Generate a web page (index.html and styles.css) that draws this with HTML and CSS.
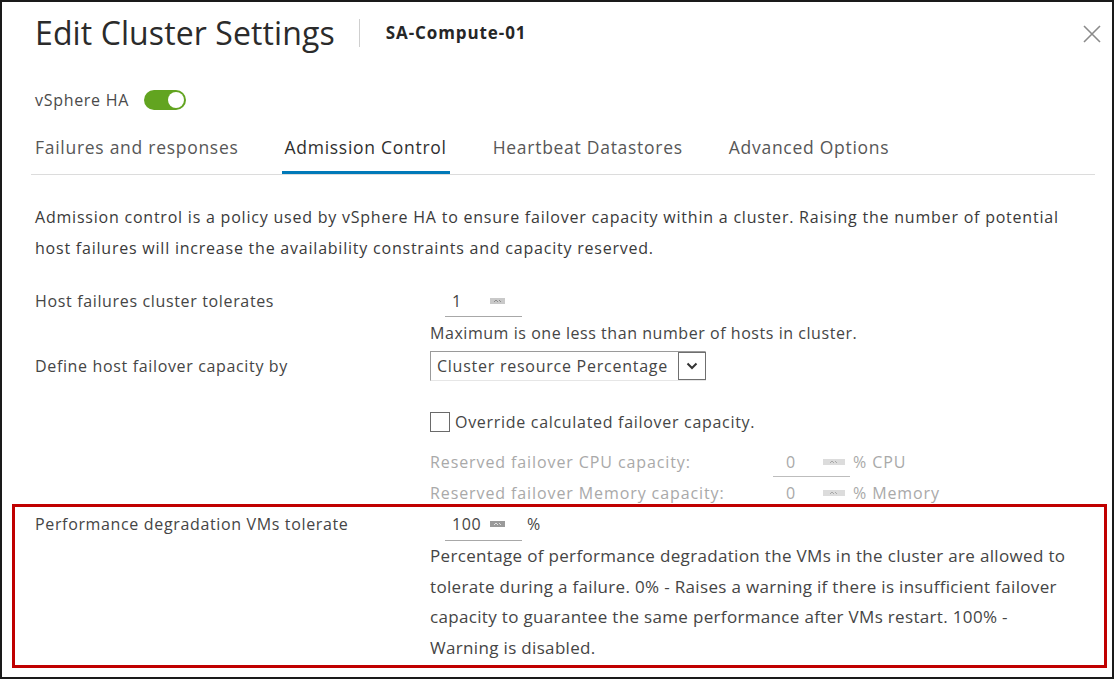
FILE: index.html
```html
<!DOCTYPE html>
<html lang="en">
<head>
  <meta charset="UTF-8" />
  <title>Edit Cluster Settings</title>
  <link rel="stylesheet" href="styles.css">
</head>
<body>
  <div class="dialog">
    <!-- Header -->
    <header class="dialog-header">
      <h1 class="title">Edit Cluster Settings</h1>
      <span class="divider"></span>
      <span class="subtitle">SA-Compute-01</span>
      <button type="button" class="close" aria-label="Close">
        <svg width="20" height="20" viewBox="0 0 20 20">
          <path d="M2 2 L18 18 M18 2 L2 18" stroke="#8a8a8a" stroke-width="1.6" fill="none"/>
        </svg>
      </button>
    </header>

    <div class="ha-row">
      <span>vSphere HA</span>
      <span class="toggle"><span class="knob"></span></span>
    </div>

    <nav class="tabs">
      <span class="tab">Failures and responses</span>
      <span class="tab active">Admission Control</span>
      <span class="tab">Heartbeat Datastores</span>
      <span class="tab">Advanced Options</span>
    </nav>

    <p class="intro">Admission control is a policy used by vSphere HA to ensure failover capacity within a cluster. Raising the number of potential host failures will increase the availability constraints and capacity reserved.</p>

    <div class="row first">
      <div class="label">Host failures cluster tolerates</div>
      <div class="control">
        <div class="spin">
          <span class="val">1</span>
          <svg class="arrows" width="15" height="6" viewBox="0 0 15 6"><rect width="15" height="6" fill="#c9c9c9"/><path d="M4 4 L6 2 L8 4 M9 2 L11 4" stroke="#8c8c8c" stroke-width="1" fill="none"/></svg>
        </div>
        <div class="help">Maximum is one less than number of hosts in cluster.</div>
      </div>
    </div>

    <div class="row select-row">
      <div class="label">Define host failover capacity by</div>
      <div class="control">
        <div class="select">
          <span class="select-text">Cluster resource Percentage</span>
          <span class="caret">
            <svg width="12" height="8" viewBox="0 0 12 8"><path d="M1.5 1.5 L6 6 L10.5 1.5" stroke="#333" stroke-width="2" fill="none"/></svg>
          </span>
        </div>
      </div>
    </div>

    <div class="row check-row">
      <div class="label"></div>
      <div class="control check">
        <span class="box"></span>
        <span>Override calculated failover capacity.</span>
      </div>
    </div>

    <div class="row reserved">
      <div class="label"></div>
      <div class="control disabled">
        <span class="res-label">Reserved failover CPU capacity:</span>
        <div class="spin small">
          <span class="val">0</span>
          <svg class="arrows" width="22" height="6" viewBox="0 0 22 6"><rect width="22" height="6" fill="#dcdcdc"/><path d="M7 4 L9 2 L11 4 M12 2 L14 4" stroke="#a8a8a8" stroke-width="1" fill="none"/></svg>
        </div>
        <span class="unit">% CPU</span>
      </div>
    </div>

    <div class="row reserved last">
      <div class="label"></div>
      <div class="control disabled">
        <span class="res-label">Reserved failover Memory capacity:</span>
        <div class="spin small plain">
          <span class="val">0</span>
          <svg class="arrows" width="22" height="6" viewBox="0 0 22 6"><rect width="22" height="6" fill="#dcdcdc"/><path d="M7 4 L9 2 L11 4 M12 2 L14 4" stroke="#a8a8a8" stroke-width="1" fill="none"/></svg>
        </div>
        <span class="unit">% Memory</span>
      </div>
    </div>

    <!-- highlighted setting -->
    <div class="highlight">
      <div class="row perf">
        <div class="label">Performance degradation VMs tolerate</div>
        <div class="control">
          <div class="spin-line">
            <div class="spin">
              <span class="val">100</span>
              <svg class="arrows" width="15" height="6" viewBox="0 0 15 6"><rect width="15" height="6" fill="#9a9a9a"/><path d="M4 4 L6 2 L8 4 M9 2 L11 4" stroke="#e0e0e0" stroke-width="1" fill="none"/></svg>
            </div>
            <span class="pct">%</span>
          </div>
          <p class="desc">Percentage of performance degradation the VMs in the cluster are allowed to tolerate during a failure. 0% - Raises a warning if there is insufficient failover capacity to guarantee the same performance after VMs restart. 100% - Warning is disabled.</p>
        </div>
      </div>
    </div>
  </div>
</body>
</html>
```

FILE: styles.css
```css
* {
  box-sizing: border-box;
}

body {
  margin: 0;
  font-family: "Open Sans", "Noto Sans", Arial, sans-serif;
  color: #404040;
  background: #fff;
}

.dialog {
  width: 1114px;
  height: 679px;
  border: 2px solid #1a1a1a;
  padding: 0 17px 0 33px;
  overflow: hidden;
}

/* Header */
.dialog-header {
  display: flex;
  align-items: center;
  height: 62px;
}

.title {
  margin: 0;
  font-size: 32px;
  font-weight: 400;
  line-height: 40px;
  color: #2b2b2b;
  letter-spacing: 0.1px;
}

.divider {
  width: 1px;
  height: 28px;
  background: #cfcfcf;
  margin: 0 26px 0 24px;
}

.subtitle {
  font-size: 17px;
  font-weight: 700;
  letter-spacing: 0.9px;
  color: #262626;
  margin-top: -2px;
}

.close {
  margin-left: auto;
  margin-right: -7px;
  margin-top: 4px;
  background: none;
  border: none;
  padding: 0;
  cursor: pointer;
}

/* vSphere HA toggle */
.ha-row {
  display: flex;
  align-items: center;
  gap: 15px;
  margin-top: 24px;
  height: 24px;
  font-size: 16px;
  letter-spacing: 0.7px;
  color: #4a4a4a;
}

.toggle {
  width: 42px;
  height: 20px;
  border-radius: 10px;
  background: #62a420;
  display: flex;
  align-items: center;
  justify-content: flex-end;
  padding-right: 2px;
}

.knob {
  width: 16px;
  height: 16px;
  border-radius: 50%;
  background: #fff;
}

/* Tabs */
.tabs {
  display: flex;
  gap: 40px;
  border-bottom: 1px solid #dcdcdc;
  margin-left: -4px;
}

.tab {
  font-size: 17.5px;
  letter-spacing: 0.72px;
  line-height: 24px;
  padding: 23px 3px 12px;
  border-bottom: 3px solid transparent;
  color: #575757;
}

.tab:first-child {
  padding-left: 4px;
}

.tab.active {
  color: #2f2f2f;
  border-bottom-color: #0079b8;
}

/* Body text */
.intro {
  margin: 27px 20px 0 0;
  font-size: 16px;
  letter-spacing: 0.78px;
  line-height: 31px;
  color: #3a3a3a;
}

.row {
  display: flex;
}

.row.first {
  margin-top: 22px;
}

.label {
  width: 395px;
  flex-shrink: 0;
  font-size: 16px;
  letter-spacing: 0.65px;
  line-height: 30px;
  color: #454545;
}

.control {
  font-size: 16px;
  letter-spacing: 0.55px;
  color: #454545;
}

.spin {
  display: flex;
  align-items: center;
  width: 77px;
  height: 31px;
  margin-left: 15px;
  padding-left: 7px;
  border-bottom: 1px solid #a8a8a8;
}

.spin .val {
  width: 38px;
}

.help {
  line-height: 32px;
}

.select-row {
  margin-top: 2px;
}

.select {
  display: flex;
  align-items: center;
  width: 276px;
  height: 30px;
  border: 1px solid #9a9a9a;
  border-right-color: #e6e6e6;
  border-bottom-color: #e6e6e6;
  padding: 0 0 0 6px;
}

.select-text {
  flex: 1;
  letter-spacing: 0.75px;
}

.caret {
  width: 28px;
  height: 28px;
  border: 1px solid #6f6f6f;
  display: flex;
  align-items: center;
  justify-content: center;
  margin-right: -1px;
}

.check-row {
  margin-top: 26px;
}

.check {
  display: flex;
  align-items: center;
  height: 30px;
  letter-spacing: 0.7px;
}

.box {
  width: 20px;
  height: 20px;
  border: 1px solid #6a6a6a;
  margin-right: 5px;
}

.reserved {
  margin-top: 10px;
}

.reserved.last {
  margin-top: 1px;
  height: 28px;
}

.disabled {
  display: flex;
  align-items: center;
  height: 30px;
  color: #a9a9a9;
  letter-spacing: 0.9px;
}

.res-label {
  width: 343px;
}

.spin.small {
  margin-left: 0;
  padding-left: 13px;
  height: 30px;
  border-bottom-color: #bdbdbd;
}

.spin.small .val {
  width: 37px;
}

.spin.plain {
  border-bottom: none;
}

.unit {
  margin-left: 3px;
}

/* Red outline around the highlighted setting */
.highlight {
  border: 3px solid #c00000;
  margin: -2px -12px 0 -23px;
  padding: 2px 0 2px 20px;
}

.perf .label {
  line-height: 30px;
}

.spin-line {
  display: flex;
  align-items: flex-start;
}

.spin-line .spin {
  height: 32px;
  align-items: flex-start;
  padding-top: 4px;
}

.spin-line .spin .arrows {
  margin-top: 8px;
}

.pct {
  margin-left: 5px;
  line-height: 30px;
}

.desc {
  margin: 0;
  font-size: 17px;
  line-height: 30.5px;
  letter-spacing: 0.33px;
  width: 645px;
}
```
